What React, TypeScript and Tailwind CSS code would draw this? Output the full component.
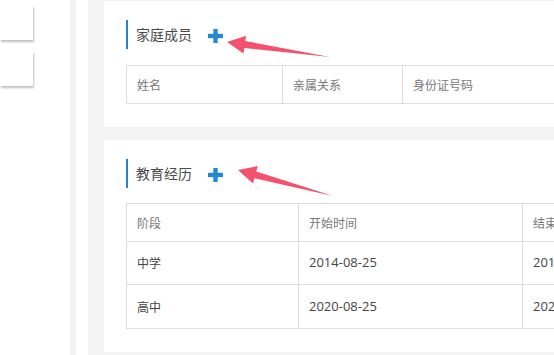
import React from "react";

const cjk = { fontFamily: '"Microsoft YaHei", "Noto Sans CJK SC", "Noto Sans", sans-serif' };
const num = { fontFamily: '"Open Sans", "Noto Sans CJK SC", sans-serif' };

function PlusIcon() {
    return (
        <svg width="15" height="14" viewBox="0 0 15 14" className="block">
            <rect x="5.3" y="0" width="4.4" height="14" fill="#2589d2" />
            <rect x="0" y="4.8" width="15" height="4.4" fill="#2589d2" />
        </svg>
    );
}

// red annotation arrow pointing at the plus
function Arrow(props: { className: string, d: string }) {
    return (
        <svg width="110" height="40" viewBox="0 0 110 40" className={"absolute " + props.className}>
            <path d={props.d} fill="#f4516c" />
        </svg>
    );
}

function Title(props: { text: string }) {
    return (
        <div className="relative flex items-center h-[29px]">
            <div className="w-[2px] h-full bg-[#1f86cf]"></div>
            <span className="ml-[8px] text-[14px] text-[#4a4a4a]" style={cjk}>{props.text}</span>
            <span className="ml-[16px] mt-[2px]"><PlusIcon /></span>
        </div>
    );
}

export default function App() {
    return (
        <div className="w-[554px] h-[355px] overflow-hidden flex bg-white">
            {/* left nav */}
            <div className="w-[70px] shrink-0 bg-white pt-[5px] flex flex-col gap-[11px]">
                <div className="w-[33px] h-[35px] bg-white shadow-[1px_2px_2px_rgba(0,0,0,0.25)]"></div>
                <div className="w-[33px] h-[35px] bg-white shadow-[1px_2px_2px_rgba(0,0,0,0.25)]"></div>
            </div>
            <div className="w-[6px] shrink-0 bg-[#f3f3f3]"></div>
            <div className="w-[12px] shrink-0 bg-white"></div>

            {/* main */}
            <div className="w-[466px] shrink-0 bg-[#f3f3f3] pl-[16px] pt-[1px] flex flex-col gap-[13px] overflow-hidden">
                <div className="relative w-[600px] h-[126px] bg-white pl-[22px] pt-[19px]">
                    <Title text="家庭成员" />
                    <Arrow className="left-[122px] top-[31px]" d="M1 10 L20.1 3.7 L19.3 9.1 L104 25 L18.3 16.1 L17.5 21.5 Z" />
                    <table className="mt-[16px] border-collapse text-[12px] text-[#777]" style={cjk}>
                        <tbody>
                            <tr className="h-[38px]">
                                <td className="w-[156px] border border-[#ddd] pl-[10px]">姓名</td>
                                <td className="w-[120px] border border-[#ddd] pl-[10px]">亲属关系</td>
                                <td className="w-[300px] border border-[#ddd] pl-[10px]">身份证号码</td>
                            </tr>
                        </tbody>
                    </table>
                </div>

                <div className="relative w-[600px] h-[212px] bg-white pl-[22px] pt-[19px]">
                    <Title text="教育经历" />
                    <Arrow className="left-[133px] top-[20px]" d="M1 10 L20.8 6.1 L19.3 11.4 L96 36 L17.5 18.2 L16 23.5 Z" />
                    <table className="mt-[15px] border-collapse text-[12px]" style={cjk}>
                        <tbody>
                            <tr className="h-[38px] text-[#777]">
                                <td className="w-[172px] border border-[#ddd] pl-[10px]">阶段</td>
                                <td className="w-[224px] border border-[#ddd] pl-[10px]">开始时间</td>
                                <td className="w-[180px] border border-[#ddd] pl-[10px]">结束时间</td>
                            </tr>
                            <tr className="h-[43px] text-[#444]">
                                <td className="border border-[#ddd] pl-[10px]">中学</td>
                                <td className="border border-[#ddd] pl-[10px] text-[13px]" style={num}>2014-08-25</td>
                                <td className="border border-[#ddd] pl-[10px] text-[13px]" style={num}>2017-06-30</td>
                            </tr>
                            <tr className="h-[44px] text-[#444]">
                                <td className="border border-[#ddd] pl-[10px]">高中</td>
                                <td className="border border-[#ddd] pl-[10px] text-[13px]" style={num}>2020-08-25</td>
                                <td className="border border-[#ddd] pl-[10px] text-[13px]" style={num}>2023-06-30</td>
                            </tr>
                        </tbody>
                    </table>
                </div>
            </div>
        </div>
    );
}
